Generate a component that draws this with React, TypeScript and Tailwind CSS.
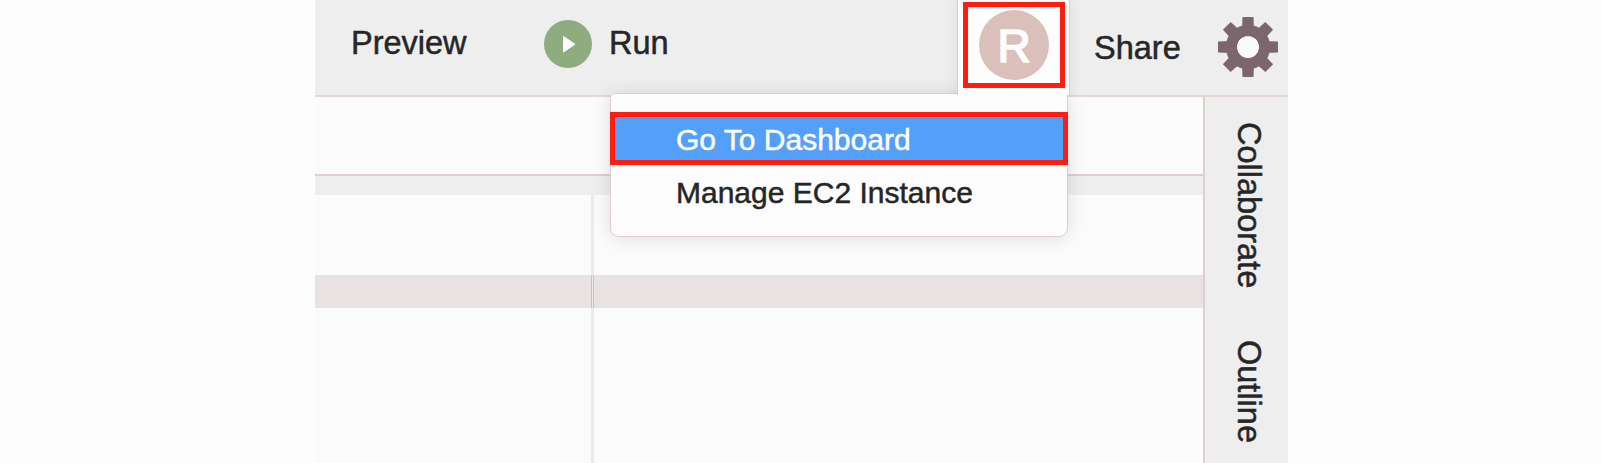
import React from "react";

const teeth = [0, 45, 90, 135, 180, 225, 270, 315];

function Gear() {
  return (
    <svg width="62" height="62" viewBox="-31 -31 62 62" className="shrink-0">
      <g fill="#7a666b">
        {teeth.map((angle) => (
          <path key={angle} d="M-6 -18L-5.5 -30H5.5L6 -18Z" transform={`rotate(${angle})`} />
        ))}
      </g>
      <circle r="16.5" fill="none" stroke="#7a666b" strokeWidth="11.4" />
      <circle r="10.8" fill="#fafafa" />
    </svg>
  );
}

function RunIcon() {
  return (
    <svg width="48" height="48" viewBox="0 0 48 48" className="mt-[19.5px] shrink-0">
      <circle cx="24" cy="24" r="24" fill="#8fac7f" />
      <path d="M19.5 16.5L31 24.2L19.5 32Z" fill="#fdfdfd" stroke="#fdfdfd" strokeWidth="1" strokeLinejoin="round" />
    </svg>
  );
}

function Toolbar() {
  return (
    <header className="flex h-[97px] shrink-0 items-start border-b-2 border-[#e3d6d3] bg-[#eeeeee] text-[32.5px] leading-[37px]">
      <span className="ml-[36px] mt-[25px] w-[193px]">Preview</span>
      <RunIcon />
      <span className="ml-[17px] mt-[25px] w-[60px]">Run</span>
      <div className="relative z-20 ml-[288px] h-[95px] w-[113px] shrink-0 border-x border-[#ddcfcc] bg-[#fdfdfd] pl-[5px] pt-[2px] shadow-[0_0_14px_rgba(0,0,0,0.08)] [clip-path:inset(0_-20px_0_-20px)]">
        <div className="flex h-[86px] w-[102px] items-center justify-center border-[5px] border-[#ff1c10]">
          <div className="flex size-[70px] items-center justify-center rounded-full bg-[#dabfba] text-[46px] leading-none text-[#fdfdfd] [-webkit-text-stroke:1.7px_#fdfdfd]">
            <span className="mt-[2px]">R</span>
          </div>
        </div>
      </div>
      <span className="ml-[24px] mt-[30px] w-[88px]">Share</span>
      <div className="ml-[35px] mt-4">
        <Gear />
      </div>
    </header>
  );
}

function Pane() {
  return (
    <main className="flex min-w-0 flex-1 flex-col">
      <div className="h-[77px]" />
      <div className="h-[21px] border-t-2 border-[#dfcfcc] bg-[#eeeeee]" />
      <div className="grid flex-1 grid-cols-[276px_3px_1fr] grid-rows-[80px_33px_1fr]">
        <div />
        <div className="bg-[#ebebeb]" />
        <div />
        <div className="bg-[#e8e3e2]" />
        <div className="border-x border-[#dcb8b3] bg-[#ebebeb]" />
        <div className="bg-[#e8e3e2]" />
        <div />
        <div className="bg-[#ebebeb]" />
        <div />
      </div>
    </main>
  );
}

function Sidebar() {
  return (
    <aside className="flex w-[85px] shrink-0 flex-col items-start border-l-2 border-[#dfcfcc] bg-[#eeeeee] pl-[25px] pt-[25px] text-[32.5px] leading-[37px]">
      <span className="h-[169px] [writing-mode:vertical-rl]">Collaborate</span>
      <span className="mt-[49px] [writing-mode:vertical-rl]">Outline</span>
    </aside>
  );
}

function AccountMenu() {
  return (
    <div className="absolute left-[295px] top-[93px] z-10 h-[144px] w-[458px] rounded-b-[9px] rounded-tl-[4px] border border-[#ddcfcc] bg-[#fdfdfd] pt-[18px] text-[30px] leading-[33px] shadow-[0_1px_18px_rgba(0,0,0,0.12)]">
      <div className="-mx-px flex h-[53px] items-center border-[5px] border-[#ff1c10] bg-[#549ff9] pl-[61px] text-[#fdfdfd]">
        <span className="mt-[2px]">Go To Dashboard</span>
      </div>
      <div className="flex h-[53px] items-center pl-[65px]">
        <span className="mt-[2px]">Manage EC2 Instance</span>
      </div>
    </div>
  );
}

export default function App() {
  return (
    <div className="flex h-[463px] w-[1602px] overflow-hidden bg-[#fdfdfd] pl-[315px] font-['Liberation_Sans',Arial,sans-serif] text-[#262626]">
      <div className="relative flex w-[973px] flex-col bg-[#fbfbfb] [-webkit-text-stroke:0.5px]">
        <Toolbar />
        <div className="flex flex-1">
          <Pane />
          <Sidebar />
        </div>
        <AccountMenu />
      </div>
    </div>
  );
}
